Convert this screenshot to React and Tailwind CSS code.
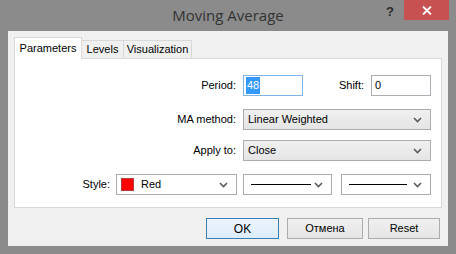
import React from "react";

function Chevron() {
  return (
    <svg width="9" height="6" viewBox="0 0 9 6" className="shrink-0">
      <polyline points="1,1 4.5,4.5 8,1" fill="none" stroke="#5a5a5a" strokeWidth="1.6" />
    </svg>
  );
}

function Select({ w, children, white }) {
  return (
    <div
      className={`flex h-[21px] items-center justify-between border border-[#acacac] pl-[4px] pr-[8px] ${
        white ? "bg-white" : "bg-gradient-to-b from-[#f0f0f0] to-[#e5e5e5]"
      } ${w}`}
    >
      <div className="flex items-center">{children}</div>
      <Chevron />
    </div>
  );
}

export default function App() {
  return (
    <div
      className="flex h-[254px] w-[456px] flex-col bg-[#8b8b8b] text-[11px] text-black"
      style={{ fontFamily: '"Liberation Sans", Arial, sans-serif' }}
    >
      {/* Title bar */}
      <div className="relative flex h-[31px] items-center justify-center">
        <span
          className="text-[15px] text-[#333333]"
          style={{ fontFamily: '"Open Sans", "Noto Sans", sans-serif' }}
        >
          Moving Average
        </span>
        <span className="absolute left-[386px] top-[2px] text-[13px] font-bold text-[#2b2b2b]">?</span>
        <div className="absolute right-[7px] top-0 flex h-[20px] w-[45px] items-center justify-center bg-[#c75050]">
          <svg width="10" height="9" viewBox="0 0 10 9">
            <path d="M1 0.5 L9 8.5 M9 0.5 L1 8.5" stroke="white" strokeWidth="1.8" />
          </svg>
        </div>
      </div>

      {/* Client area */}
      <div className="mx-[8px] flex h-[215px] flex-col bg-[#f0f0f0] px-[6px] pt-[6px]">
        {/* Tabs */}
        <div className="relative z-10 flex h-[21px] items-end">
          <div className="-mb-px flex h-[22px] w-[68px] items-center justify-center border border-b-0 border-[#d9d9d9] bg-white pb-[1px]">
            Parameters
          </div>
          <div className="flex h-[18px] w-[42px] items-center justify-center border border-l-0 border-b-0 border-[#d9d9d9] bg-[#f0f0f0]">
            Levels
          </div>
          <div className="flex h-[18px] w-[68px] items-center justify-center border border-l-0 border-b-0 border-[#d9d9d9] bg-[#f0f0f0]">
            Visualization
          </div>
        </div>
        {/* Panel */}
        <div className="flex h-[150px] w-[428px] flex-col border border-[#d9d9d9] bg-white pt-[16px]">
          {/* Row 1 */}
          <div className="flex h-[21px] items-center">
            <div className="w-[222px] pr-[1px] text-right">Period:</div>
            <div className="ml-[6px] flex h-[21px] w-[60px] items-center border border-[#7eb4ea] bg-white pl-[2px]">
              <span className="bg-[#3399ff] px-[1px] text-white">48</span>
            </div>
            <div className="w-[68px] pr-[7px] text-right">Shift:</div>
            <div className="flex h-[21px] w-[60px] items-center border border-[#abadb3] bg-white pl-[3px]">0</div>
          </div>
          {/* Row 2 */}
          <div className="mt-[13px] flex h-[21px] items-center">
            <div className="w-[222px] pr-[1px] text-right">MA method:</div>
            <div className="ml-[6px]">
              <Select w="w-[188px]">Linear Weighted</Select>
            </div>
          </div>
          {/* Row 3 */}
          <div className="mt-[10px] flex h-[21px] items-center">
            <div className="w-[222px] pr-[1px] text-right">Apply to:</div>
            <div className="ml-[6px]">
              <Select w="w-[188px]">Close</Select>
            </div>
          </div>
          {/* Row 4 */}
          <div className="mt-[13px] flex h-[21px] items-center">
            <div className="w-[96px] pr-[1px] text-right">Style:</div>
            <div className="ml-[5px]">
              <Select w="w-[121px]" white>
                <span className="mr-[7px] h-[13px] w-[13px] border border-[#b04040] bg-[#ff0000]" />
                Red
              </Select>
            </div>
            <div className="ml-[6px]">
              <Select w="w-[89px]" white>
                <span className="ml-[3px] h-px w-[60px] bg-black" />
              </Select>
            </div>
            <div className="ml-[9px]">
              <Select w="w-[90px]" white>
                <span className="ml-[3px] h-px w-[58px] bg-black" />
              </Select>
            </div>
          </div>
        </div>
        {/* Buttons */}
        <div className="mt-[10px] flex h-[21px] items-center pl-[192px]">
          <div className="flex h-[21px] w-[73px] items-center justify-center border border-[#3c7fb1] bg-gradient-to-b from-[#ecf4fc] to-[#dcecfc] text-[12px]">
            OK
          </div>
          <div className="ml-[8px] flex h-[21px] w-[76px] items-center justify-center border border-[#acacac] bg-gradient-to-b from-[#f0f0f0] to-[#e5e5e5]">
            Отмена
          </div>
          <div className="ml-[5px] flex h-[21px] w-[72px] items-center justify-center border border-[#acacac] bg-gradient-to-b from-[#f0f0f0] to-[#e5e5e5]">
            Reset
          </div>
        </div>
      </div>
    </div>
  );
}
